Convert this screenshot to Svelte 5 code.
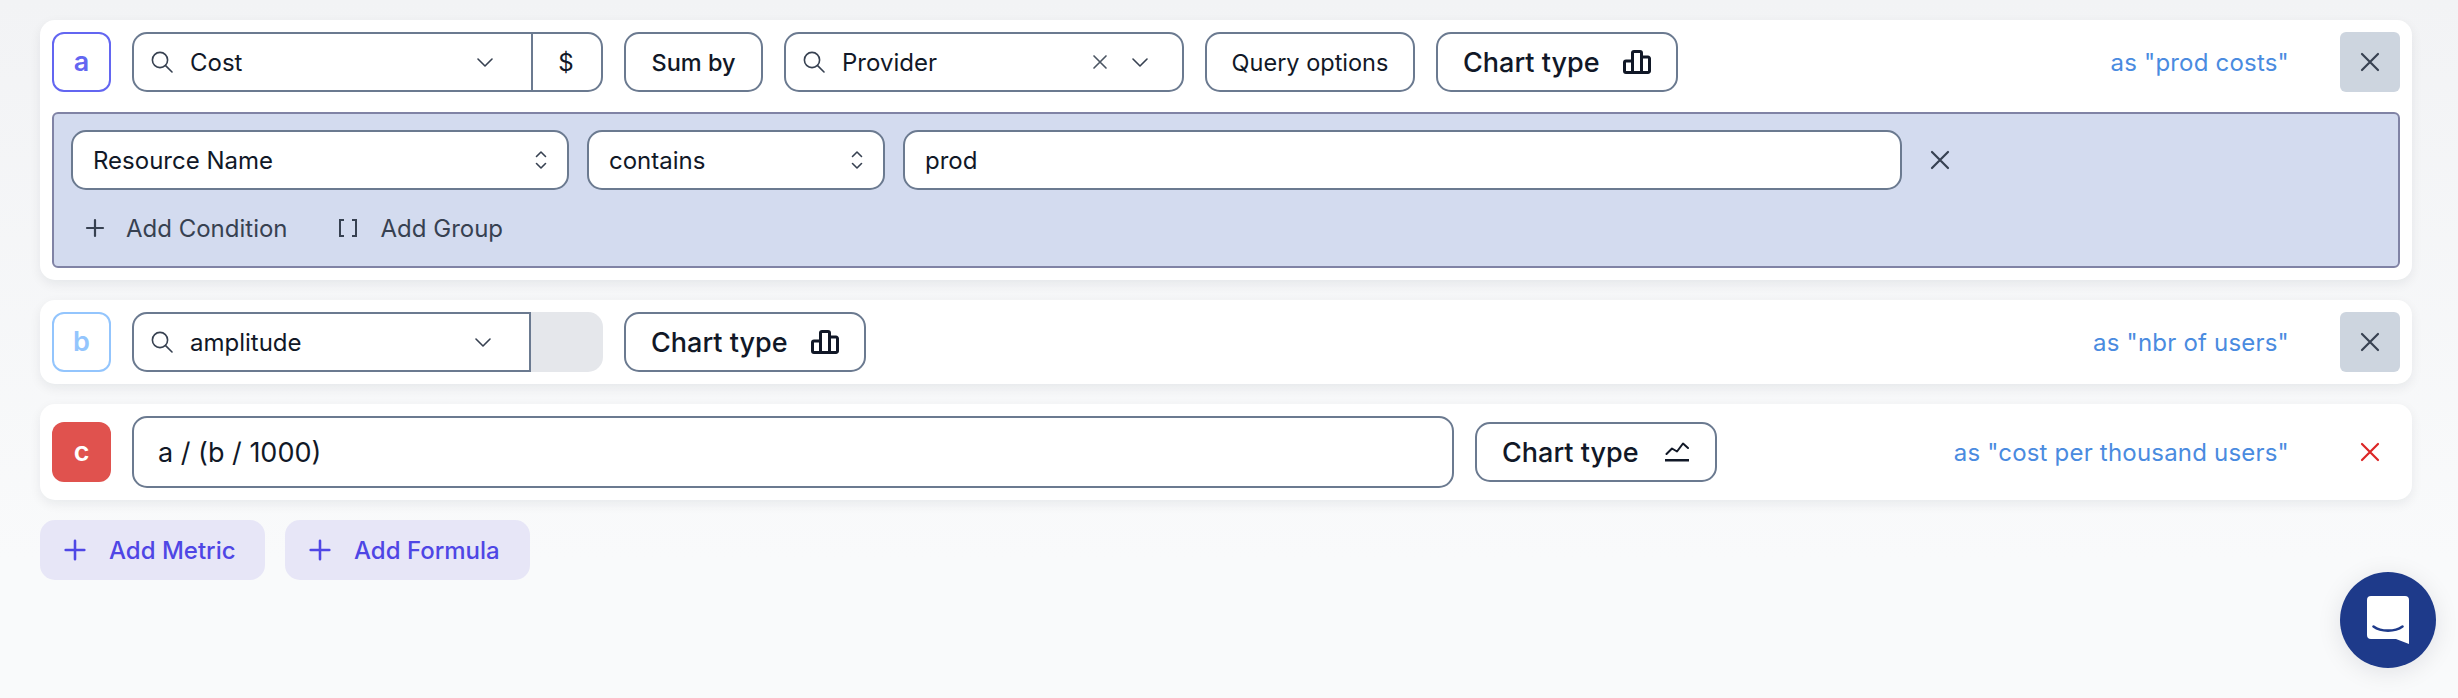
<script>
  const X = 'M4 4L20 20M20 4L4 20';
  const PLUS = 'M12 4V20M4 12H20';
</script>

{#snippet search()}
  <svg class="i-search" viewBox="0 0 22 22" fill="none" stroke="#374151" stroke-width="1.6" stroke-linecap="round"><circle cx="9" cy="9" r="7.6"/><path d="M14.6 14.6L21 21"/></svg>
{/snippet}
{#snippet chevron()}
  <svg class="i-chev" viewBox="0 0 16 9" fill="none" stroke="#374151" stroke-width="1.6" stroke-linecap="round" stroke-linejoin="round"><path d="M1 1L8 8L15 1"/></svg>
{/snippet}
{#snippet updown()}
  <svg class="i-updown" viewBox="0 0 12 20" fill="none" stroke="#374151" stroke-width="1.6" stroke-linecap="round" stroke-linejoin="round"><path d="M1.5 6.5L6 2L10.5 6.5M1.5 13.5L6 18L10.5 13.5"/></svg>
{/snippet}
{#snippet close(cls = 'i-x')}
  <svg class={cls} viewBox="0 0 24 24" fill="none" stroke="currentColor" stroke-width="2.2" stroke-linecap="round"><path d={X}/></svg>
{/snippet}
{#snippet plus(cls = 'i-plus')}
  <svg class={cls} viewBox="0 0 24 24" fill="none" stroke="currentColor" stroke-width="2.2" stroke-linecap="round"><path d={PLUS}/></svg>
{/snippet}
{#snippet bars()}
  <svg class="i-bars" viewBox="0 0 28 24" fill="none" stroke="#111827" stroke-width="3" stroke-linejoin="round"><path d="M9.5 22.5H3a1.5 1.5 0 0 1-1.5-1.5V12.5a1.5 1.5 0 0 1 1.5-1.5H9.5M9.5 22.5V3a1.5 1.5 0 0 1 1.5-1.5H17a1.5 1.5 0 0 1 1.5 1.5V22.5M9.5 22.5H18.5M18.5 22.5H25a1.5 1.5 0 0 0 1.5-1.5V8.5A1.5 1.5 0 0 0 25 7H18.5"/></svg>
{/snippet}
{#snippet line()}
  <svg class="i-line" viewBox="0 0 24 20" fill="none" stroke="#111827" stroke-linecap="round" stroke-linejoin="round"><path stroke-width="2" d="M1.5 12L7 6.500L12 9.500L18 1.500L23 6"/><path stroke-width="2.600" d="M0.500 18.300H23.500"/></svg>
{/snippet}
{#snippet charttype(kind)}
  <button class="chip chart {kind}">
    <span>Chart type</span>
    {#if kind === 'bars'}{@render bars()}{:else}{@render line()}{/if}
  </button>
{/snippet}

<main class="page">
  <section class="card">
    <div class="row">
      <div class="tile a">a</div>
      <div class="combo metric">
        <div class="combo-main">
          {@render search()}
          <span class="grow">Cost</span>
          {@render chevron()}
        </div>
        <div class="unit">$</div>
      </div>
      <button class="chip sumby">Sum by</button>
      <div class="combo provider">
        {@render search()}
        <span class="grow">Provider</span>
        <span class="clear">{@render close('i-x-small')}</span>
        {@render chevron()}
      </div>
      <button class="chip options">Query options</button>
      {@render charttype('bars')}
      <span class="alias">as "prod costs"</span>
      <button class="remove muted">{@render close()}</button>
    </div>

    <div class="filters">
      <div class="filter-row">
        <div class="field name"><span class="grow">Resource Name</span>{@render updown()}</div>
        <div class="field op"><span class="grow">contains</span>{@render updown()}</div>
        <div class="field value">prod</div>
        <span class="filter-x">{@render close()}</span>
      </div>
      <div class="filter-actions">
        <span class="action cond">{@render plus('i-plus-small')}<span>Add Condition</span></span>
        <span class="action group"><span class="brackets"><i></i><i></i></span><span>Add Group</span></span>
      </div>
    </div>
  </section>

  <section class="card">
    <div class="row">
      <div class="tile b">b</div>
      <div class="combo metric disabled">
        <div class="combo-main">
          {@render search()}
          <span class="grow">amplitude</span>
          {@render chevron()}
        </div>
        <div class="unit"></div>
      </div>
      {@render charttype('bars')}
      <span class="alias">as "nbr of users"</span>
      <button class="remove muted">{@render close()}</button>
    </div>
  </section>

  <section class="card">
    <div class="row">
      <div class="tile c">c</div>
      <div class="formula">a / (b / 1000)</div>
      {@render charttype('line')}
      <span class="alias wide">as "cost per thousand users"</span>
      <button class="remove danger">{@render close()}</button>
    </div>
  </section>

  <div class="adders">
    <button class="adder metric-add">{@render plus('i-plus-blue')}<span>Add Metric</span></button>
    <button class="adder formula-add">{@render plus('i-plus-blue')}<span>Add Formula</span></button>
  </div>
</main>

<button class="chat" aria-label="Chat">
  <svg viewBox="0 0 42 48" width="42" height="48"><path fill="#fff" d="M4 0H38a4 4 0 0 1 4 4V48L29 43H4a4 4 0 0 1-4-4V4a4 4 0 0 1 4-4Z"/><path d="M6.500 30.500C14 36 28 36 35.500 30.500" fill="none" stroke="#1e3a8a" stroke-width="2.600" stroke-linecap="round"/></svg>
</button>

<style>
  :global(body) {
    margin: 0;
    background: linear-gradient(#f2f3f5 0, #f9fafb 560px);
    min-height: 698px;
  }
  * { box-sizing: border-box; }
  .page {
    padding: 20px 46px 0 40px;
    font-family: Inter, "Liberation Sans", sans-serif;
    font-size: 24px;
    color: #111827;
    display: flex;
    flex-direction: column;
    gap: 20px;
    height: 698px;
  }
  .card {
    background: #fff;
    border-radius: 15px;
    padding: 12px;
    box-shadow: 0 4px 12px rgba(17, 24, 39, 0.07);
  }
  .row { display: flex; align-items: center; gap: 21px; }
  .tile {
    flex: none;
    width: 59px;
    height: 60px;
    border-radius: 12px;
    display: flex;
    align-items: center;
    justify-content: center;
    font-size: 27px;
    font-weight: 600;
    padding-bottom: 2px;
  }
  .tile.a { border: 2px solid #6366f1; color: #6366f1; }
  .tile.b { border: 2px solid #93c5fd; color: #93c5fd; }
  .tile.c { background: #e0524e; color: #fff; }

  .combo, .chip, .field, .formula {
    background: #fff;
    border: 2px solid #6b7a90;
    border-radius: 15px;
    height: 60px;
    display: flex;
    align-items: center;
  }
  .combo.metric { width: 471px; padding: 0; }
  .combo-main {
    flex: none;
    width: 399px;
    height: 100%;
    display: flex;
    align-items: center;
    padding: 0 38px 0 17px;
    border-right: 2px solid #6b7a90;
  }
  .unit { flex: 1; text-align: center; padding-right: 2px; }
  .disabled { background: #e5e7eb; border: none; }
  .disabled .combo-main {
    background: #fff;
    border: 2px solid #6b7a90;
    border-radius: 15px 0 0 15px;
  }
  .grow { flex: 1; min-width: 0; }
  .i-search { width: 22px; height: 22px; margin-right: 17px; flex: none; }
  .i-chev { width: 16px; height: 9px; flex: none; }
  .i-updown { width: 12px; height: 20px; flex: none; }
  .i-x { width: 24px; height: 24px; display: block; }
  .i-x-small { width: 18px; height: 18px; display: block; }
  .provider { width: 400px; padding: 0 34px 0 17px; }
  .clear { color: #4b5563; margin-right: 23px; }

  .chip {
    font: inherit;
    color: inherit;
    justify-content: center;
    font-weight: 500;
    flex: none;
    padding: 0;
  }
  .sumby { width: 139px; font-size: 23.5px; }
  .options { width: 210px; font-weight: 400; font-size: 23.5px; }
  .chart { width: 242px; font-size: 27px; font-weight: 500; justify-content: flex-start; padding-left: 25px; }
  .i-bars { width: 28px; height: 24px; margin-left: 23px; }
  .i-line { width: 24px; height: 20px; margin-left: 26px; }

  .alias { margin-left: auto; color: #4a8be0; margin-right: 30px; letter-spacing: 0.2px; }
  .remove {
    flex: none;
    width: 60px;
    height: 60px;
    border: none;
    border-radius: 6px;
    padding: 0;
    display: flex;
    align-items: center;
    justify-content: center;
    background: transparent;
  }
  .muted { background: #cdd5df; color: #374151; }
  .danger { color: #dc2626; }

  .filters {
    margin-top: 20px;
    background: #d3dbef;
    border: 2px solid #8083a5;
    border-radius: 6px;
    height: 156px;
    padding: 16px 17px;
  }
  .filter-row { display: flex; align-items: center; gap: 18px; }
  .field { padding: 0 20px; flex: none; }
  .name { width: 498px; }
  .op { width: 298px; }
  .value { width: 999px; }
  .filter-x { color: #374151; margin-left: 8px; display: block; }
  .filter-actions {
    display: flex;
    align-items: center;
    margin-top: 20px;
    height: 36px;
    color: #374151;
    padding-left: 12px;
  }
  .action { display: flex; align-items: center; }
  .i-plus-small { width: 24px; height: 24px; color: #374151; margin-right: 19px; }
  .cond { margin-right: 51px; }
  .brackets { display: flex; justify-content: space-between; width: 18px; height: 18px; margin-right: 24px; }
  .brackets i { width: 5px; height: 18px; border: 2px solid #374151; }
  .brackets i:first-child { border-right: none; }
  .brackets i:last-child { border-left: none; }

  .formula { flex: none; width: 1322px; height: 72px; font-size: 27px; padding: 0 24px; }

  .adders { display: flex; gap: 20px; }
  .adder {
    font: inherit;
    color: #4f46e5;
    font-weight: 500;
    background: #e7e6f7;
    border: none;
    border-radius: 15px;
    height: 60px;
    display: flex;
    align-items: center;
    padding: 0 0 0 21px;
  }
  .metric-add { width: 225px; }
  .formula-add { width: 245px; }
  .i-plus-blue { width: 28px; height: 28px; margin-right: 20px; }

  .chat {
    position: fixed;
    left: 2340px;
    top: 572px;
    width: 96px;
    height: 96px;
    border-radius: 50%;
    border: none;
    padding: 0;
    background: #1e3a8a;
    display: flex;
    align-items: center;
    justify-content: center;
    box-shadow: 0 4px 24px rgba(17, 24, 39, 0.1);
  }
</style>
